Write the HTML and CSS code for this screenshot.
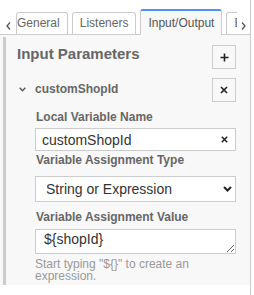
FILE: index.html
```html
<!DOCTYPE html>
<html lang="en">
<head>
    <meta charset="UTF-8">
    <meta name="viewport" content="width=device-width, initial-scale=1.0">
    <title>Properties Panel - Input/Output</title>
    <link rel="stylesheet" href="styles.css">
</head>
<body>
    <div class="panel">
        <div class="tabs">
            <button class="scroll scroll-left" title="Scroll left">
                <svg width="5" height="8" viewBox="0 0 5 8"><polyline points="4,0.5 1,4 4,7.5" fill="none" stroke="#555" stroke-width="1.3"/></svg>
            </button>
            <div class="tab-viewport">
                <div class="tab tab-first">General</div>
                <div class="tab">Listeners</div>
                <div class="tab active">Input/Output</div>
                <div class="tab">Extensions</div>
            </div>
            <button class="scroll scroll-right" title="Scroll right">
                <svg width="5" height="8" viewBox="0 0 5 8"><polyline points="1,0.5 4,4 1,7.5" fill="none" stroke="#555" stroke-width="1.3"/></svg>
            </button>
        </div>

        <div class="content">
            <div class="group">
                <div class="group-header">
                    <span class="group-title">Input Parameters</span>
                    <button class="icon-btn" title="Add parameter">
                        <svg width="9" height="9" viewBox="0 0 9 9"><path d="M4.5 0.5v8M0.5 4.5h8" stroke="#222" stroke-width="1.6"/></svg>
                    </button>
                </div>

                <div class="param-header">
                    <span class="param-toggle">
                        <svg width="7" height="5" viewBox="0 0 7 5"><polyline points="0.7,0.8 3.5,3.8 6.3,0.8" fill="none" stroke="#555" stroke-width="1.4"/></svg>
                    </span>
                    <span class="param-name">customShopId</span>
                    <button class="icon-btn" title="Remove parameter">
                        <svg width="8" height="8" viewBox="0 0 8 8"><path d="M1 1l6 6M7 1l-6 6" stroke="#222" stroke-width="1.6"/></svg>
                    </button>
                </div>

                <div class="entries">
                    <label class="entry-label" for="localName">Local Variable Name</label>
                    <div class="field">
                        <input class="text-input" id="localName" type="text" value="customShopId">
                        <span class="clear">
                            <svg width="7" height="7" viewBox="0 0 7 7"><path d="M0.8 0.8l5.4 5.4M6.2 0.8l-5.4 5.4" stroke="#222" stroke-width="1.5"/></svg>
                        </span>
                    </div>

                    <label class="entry-label label-type" for="assignType">Variable Assignment Type</label>
                    <div class="select-wrap">
                        <select id="assignType">
                            <option>String or Expression</option>
                            <option>List</option>
                            <option>Map</option>
                            <option>Script</option>
                        </select>
                        <svg class="select-arrow" width="9" height="6" viewBox="0 0 9 6"><polyline points="1,1 4.5,4.5 8,1" fill="none" stroke="#222" stroke-width="2"/></svg>
                    </div>

                    <label class="entry-label label-value" for="assignValue">Variable Assignment Value</label>
                    <textarea id="assignValue">${shopId}</textarea>

                    <div class="help">Start typing "${}" to create an expression.</div>
                </div>
            </div>
        </div>
    </div>
</body>
</html>
```

FILE: styles.css
```css
:root {
    --border: #ccc;
    --panel-bg: #f8f8f8;
    --label: #666;
    --text: #333;
    --blue: #4d90fe;
}

body {
    margin: 0;
    font-family: "Liberation Sans", Arial, sans-serif;
    font-size: 12px;
    background: #fff;
}

.panel {
    width: 250px;
    height: 295px;
    border-right: 1px solid var(--border);
}

/* tab bar */
.tabs {
    display: flex;
    height: 35px;
    background: linear-gradient(to top, var(--border) 1px, #fff 1px);
}

.scroll {
    flex-shrink: 0;
    height: 34px;
    padding: 18px 0 0;
    border: none;
    background: #fff;
    text-align: left;
    cursor: pointer;
}

.scroll svg {
    display: block;
}

.scroll-left {
    width: 16px;
    padding-left: 6px;
}

.scroll-right {
    width: 13px;
    padding-left: 4px;
}

.tab-viewport {
    flex: 1;
    display: flex;
    align-items: flex-end;
    height: 35px;
    overflow: hidden;
}

.tab {
    flex-shrink: 0;
    height: 21px;
    line-height: 20px;
    margin: 0 4px 1px 0;
    padding: 0 7px;
    border: 1px solid var(--border);
    border-bottom: none;
    border-radius: 3px 3px 0 0;
    background: #fff;
    color: var(--label);
    white-space: nowrap;
}

.tab-first {
    padding-left: 0;
}

.tab.active {
    height: 24px;
    line-height: 24px;
    margin-bottom: 0;
    border-top: 2px solid var(--blue);
    background: var(--panel-bg);
    color: #555;
}

/* content */
.content {
    background: var(--panel-bg);
    padding: 2px 0 0 3px;
}

.group {
    border-left: 3px solid var(--border);
    padding: 8px 14px 3px 11px;
}

.group-header,
.param-header {
    display: flex;
    align-items: flex-start;
    height: 24px;
}

.group-title {
    flex: 1;
    font-size: 15px;
    font-weight: bold;
    line-height: 18px;
    color: var(--label);
}

.icon-btn {
    width: 24px;
    height: 24px;
    padding: 0;
    border: 1px solid var(--border);
    background: transparent;
    display: flex;
    align-items: center;
    justify-content: center;
    cursor: pointer;
}

.param-header {
    margin-top: 9px;
}

.param-toggle {
    width: 16px;
    height: 22px;
    padding-left: 2px;
    display: flex;
    align-items: center;
}

.param-name {
    flex: 1;
    font-weight: bold;
    line-height: 22px;
    color: var(--label);
}

.entries {
    margin-top: 8px;
    padding-left: 18px;
}

.entry-label {
    display: block;
    padding-left: 1px;
    font-weight: bold;
    line-height: 14px;
    color: var(--label);
}

.field {
    display: flex;
    align-items: center;
    height: 23px;
    margin-top: 4px;
    box-sizing: border-box;
    border: 1px solid var(--border);
    background: #fff;
}

.text-input {
    flex: 1;
    min-width: 0;
    height: 21px;
    padding: 0 0 0 6px;
    border: none;
    outline: none;
    background: transparent;
    font-family: inherit;
    font-size: 14px;
    color: var(--text);
}

.clear {
    width: 22px;
    display: flex;
    justify-content: center;
}

.label-type {
    margin-top: 2px;
}

.select-wrap {
    position: relative;
    margin-top: 9px;
}

select {
    display: block;
    width: 100%;
    height: 26px;
    padding: 0 0 0 10px;
    border: 1px solid var(--border);
    border-radius: 0;
    background: #fff;
    appearance: none;
    -webkit-appearance: none;
    font-family: inherit;
    font-size: 14px;
    color: var(--text);
}

.select-arrow {
    position: absolute;
    right: 4px;
    top: 10px;
    pointer-events: none;
}

.label-value {
    margin-top: 8px;
}

textarea {
    display: block;
    width: 100%;
    height: 25px;
    margin-top: 5px;
    box-sizing: border-box;
    padding: 1px 8px;
    border: 1px solid var(--border);
    border-radius: 0;
    background: #fff;
    font-family: inherit;
    font-size: 14px;
    line-height: 17px;
    color: var(--text);
    resize: vertical;
}

.help {
    margin-top: 4px;
    line-height: 12px;
    color: #999;
}
```
